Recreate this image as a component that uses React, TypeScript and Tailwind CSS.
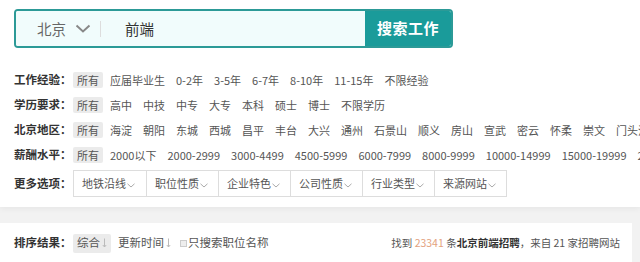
import { ReactNode } from "react";

const FONT = { fontFamily: '"Noto Sans CJK SC", "Noto Sans", sans-serif' };

const rows: { label: string; items: string[] }[] = [
  {
    label: "工作经验：",
    items: ["所有", "应届毕业生", "0-2年", "3-5年", "6-7年", "8-10年", "11-15年", "不限经验"],
  },
  {
    label: "学历要求：",
    items: ["所有", "高中", "中技", "中专", "大专", "本科", "硕士", "博士", "不限学历"],
  },
  {
    label: "北京地区：",
    items: [
      "所有", "海淀", "朝阳", "东城", "西城", "昌平", "丰台", "大兴", "通州", "石景山",
      "顺义", "房山", "宣武", "密云", "怀柔", "崇文", "门头沟",
    ],
  },
  {
    label: "薪酬水平：",
    items: [
      "所有", "2000以下", "2000-2999", "3000-4499", "4500-5999", "6000-7999",
      "8000-9999", "10000-14999", "15000-19999", "20000以上",
    ],
  },
];

const more = ["地铁沿线", "职位性质", "企业特色", "公司性质", "行业类型", "来源网站"];

function Label({ children }: { children: ReactNode }) {
  return (
    <span className="w-[59px] shrink-0 text-[11.5px] font-bold text-[#333]">{children}</span>
  );
}

function SmallChevron() {
  return (
    <svg width="8" height="5" viewBox="0 0 8 5" className="ml-[1px] mt-[3px]">
      <path d="M0.5 0.8 L4 4 L7.5 0.8" fill="none" stroke="#aaa" strokeWidth="1" />
    </svg>
  );
}

// 排序用的细箭头
function SortArrow() {
  return (
    <svg width="5" height="10" viewBox="0 0 5 10" className="ml-[2px]">
      <path d="M2.5 0.5 V9 M0.8 7 L2.5 9 L4.2 7" fill="none" stroke="#bbb" strokeWidth="1" />
    </svg>
  );
}

export default function App() {
  return (
    <div className="h-[262px] w-[640px] overflow-hidden bg-[#f2f2f2]" style={FONT}>
      {/* 搜索 + 筛选 */}
      <div className="bg-white pb-[10px] pt-[9px] shadow-[0_2px_6px_rgba(0,0,0,0.05)]">
        <div className="ml-[14px] flex h-[39px] w-[439px] overflow-hidden rounded-[4px] border-2 border-[#2c9a97]">
          <div className="flex flex-1 items-center bg-[#f1fcfc]">
            <span className="ml-[21px] text-[14.5px] text-[#666]">北京</span>
            <svg width="16" height="9" viewBox="0 0 16 9" className="ml-[9px]">
              <path d="M1.5 1.5 L8 7.5 L14.5 1.5" fill="none" stroke="#888" strokeWidth="2" />
            </svg>
            <span className="ml-[9px] h-[16px] w-px bg-[#ddd]" />
            <span className="ml-[24px] text-[14.5px] text-[#333]">前端</span>
          </div>
          <button
            type="button"
            className="w-[86px] bg-[#1a9b9a] text-[15px] font-bold tracking-[0.5px] text-white"
          >
            搜索工作
          </button>
        </div>

        <div className="mt-[19px] pl-[14px]">
          {rows.map((row) => (
            <div key={row.label} className="flex h-[25px] items-center whitespace-nowrap">
              <Label>{row.label}</Label>
              <div className="flex gap-[3px]">
                {row.items.map((item, i) => (
                  <span
                    key={item}
                    className={`h-[16px] px-[4px] text-[11px] leading-[16px] text-[#555] ${
                      i === 0 ? "rounded-[2px] bg-[#ebebeb]" : ""
                    }`}
                  >
                    {item}
                  </span>
                ))}
              </div>
            </div>
          ))}

          <div className="mt-[3px] flex items-center">
            <Label>更多选项：</Label>
            <div className="flex border border-[#ddd]">
              {more.map((m, i) => (
                <span
                  key={m}
                  className={`flex h-[25px] w-[72px] items-center pl-[8px] text-[11px] text-[#555] ${
                    i > 0 ? "border-l border-[#ddd]" : ""
                  }`}
                >
                  {m}
                  <SmallChevron />
                </span>
              ))}
            </div>
          </div>
        </div>
      </div>

      {/* 排序结果 */}
      <div className="mt-[16px] flex h-[60px] w-[632px] items-start bg-white pl-[14px] pr-[12px] pt-[10px]">
        <div className="flex h-[20px] w-full items-center whitespace-nowrap">
          <Label>排序结果：</Label>
          <span className="flex h-[19px] items-center rounded-[2px] bg-[#ebebeb] px-[4px] text-[11.5px] text-[#555]">
            综合
            <SortArrow />
          </span>
          <span className="ml-[7px] flex items-center text-[11.5px] text-[#555]">
            更新时间
            <SortArrow />
          </span>
          <span className="ml-[9px] h-[7px] w-[7px] border border-[#ccc] bg-[#eee]" />
          <span className="ml-[1px] text-[11.5px] text-[#555]">只搜索职位名称</span>
          <span className="ml-auto text-[10.5px] text-[#555]">
            找到 <span className="text-[#e3a27e]">23341</span> 条
            <span className="font-bold text-[#333]">北京前端招聘</span>，来自 21 家招聘网站
          </span>
        </div>
      </div>
    </div>
  );
}
